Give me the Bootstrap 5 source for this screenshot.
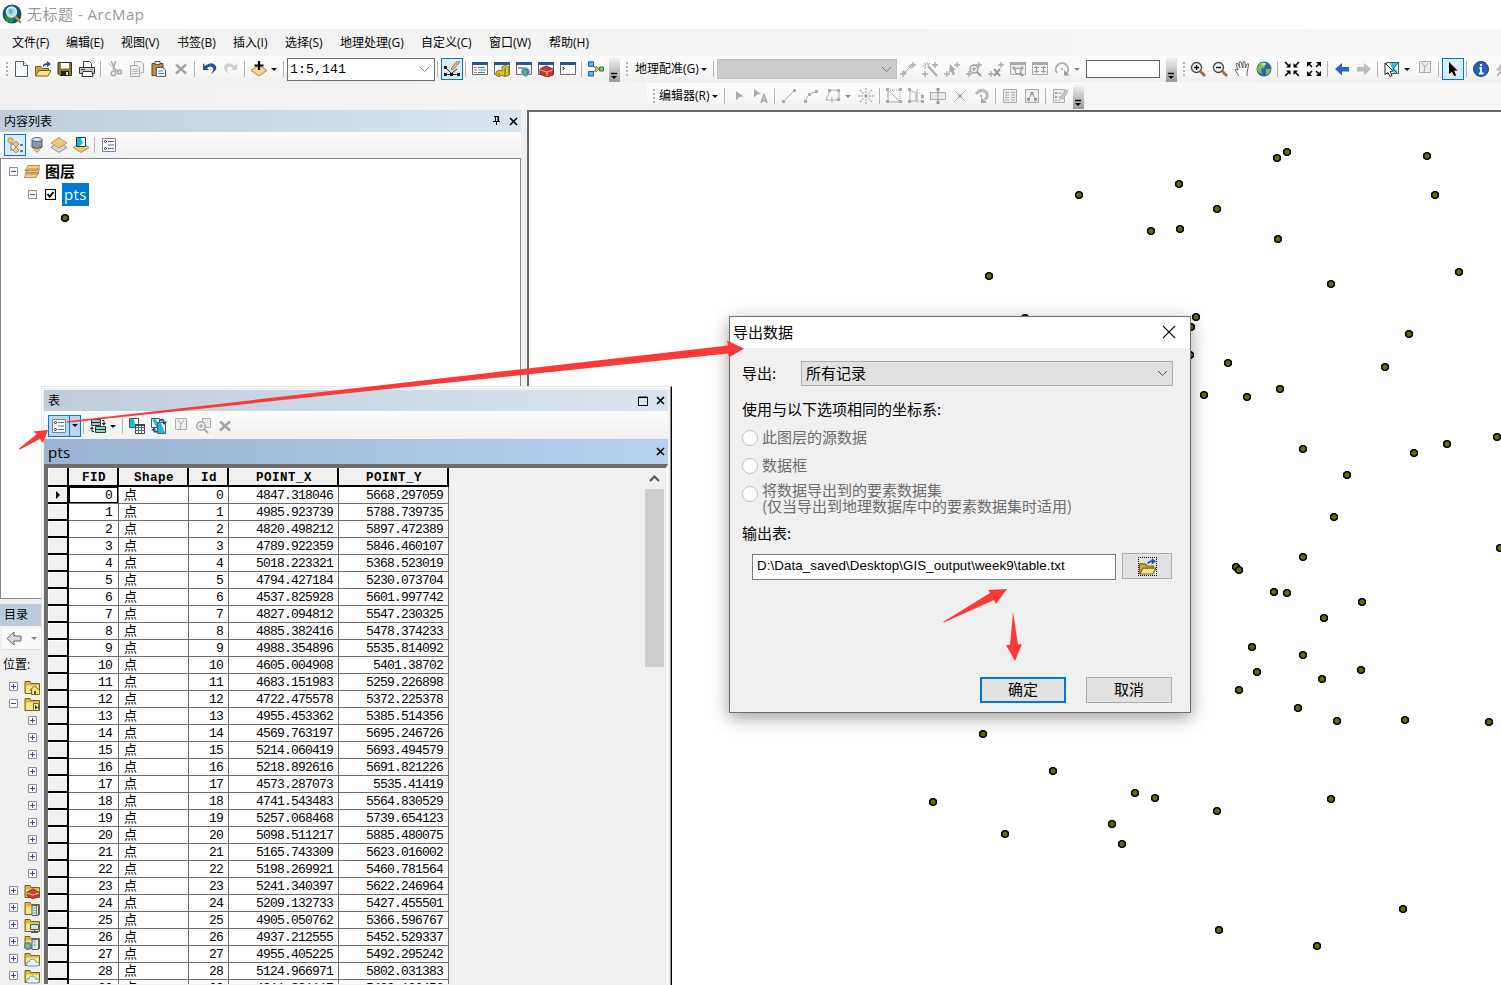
<!DOCTYPE html>
<html lang="zh-CN">
<head>
    <meta charset="UTF-8">
    <meta name="viewport" content="width=device-width, initial-scale=1.0">
    <title>无标题 - ArcMap</title>
    <link rel="stylesheet" href="https://cdn.jsdelivr.net/npm/bootstrap@5.3.0/dist/css/bootstrap.min.css">
    <style>
        body { font-family: "Open Sans", "Noto Sans CJK SC", sans-serif; font-size: 12px; line-height: 16px; color: #000; background: #f0f0f0; width: 1501px; height: 985px; }
        svg { display: block; flex: none; }
        .app-title { height: 29px; font-size: 15px; color: #999; padding: 0 0 1px 2px; }
        .app-title span { letter-spacing: .5px; }
        .app-top { height: 81px; background: linear-gradient(90deg, #f0f0f0, #f7f7f7); }
        .app-menu { height: 27px; padding-left: 12px; }
        .tool-strip { height: 26px; background: linear-gradient(#fcfcfc, #f9f9f9 50%, #eee); }
        .strip-two { width: 437px; margin-left: 647px; margin-top: 1px; }
        .tool { width: 22px; height: 22px; flex: none; display: flex; align-items: center; justify-content: center; }
        .tool.on { border: 1px solid #0078d7; background: #dcebf8; }
        .divide { width: 6px; height: 16px; flex: none; background: linear-gradient(#b5b5b5, #b5b5b5) 2px 0 / 1px 100% no-repeat; }
        .grip { width: 10px; height: 16px; flex: none; background: radial-gradient(#b4b4b4 1px, transparent 1.3px) 5px 0 / 4px 4px repeat-y; }
        .drop { width: 11px; flex: none; padding-left: 1px; }
        .drop::before { content: ""; display: block; width: 6px; border: 3px solid transparent; border-top-color: #111; border-bottom: 0; }
        .drop.dim::before { border-top-color: #888; }
        .more { width: 11px; height: 25px; flex: none; margin-left: 2px; background: linear-gradient(#f4f4f4, #999); padding: 14px 2px 0; }
        .label-menu { flex: none; white-space: nowrap; }
        .scale-box { width: 148px; height: 23px; flex: none; background: #fff; border: 1px solid #6e6e6e; font: 13.3px "Liberation Mono", monospace; padding: 0 4px 0 2px; }
        .layer-box { width: 180px; height: 20px; flex: none; background: #ccc; border: 1px solid #bfbfbf; padding-right: 4px; }
        .blank-box { width: 74px; height: 18px; flex: none; background: #fff; border: 1px solid #646464; margin: 0 4px 0 2px; }
        .work { height: 875px; }
        .dock { width: 527px; }
        .dock-title { width: 521px; height: 22px; background: linear-gradient(90deg, #bfcddb, #d8e5f1); padding: 0 3px 0 4px; }
        .dock-title span { padding-top: 2px; }
        .dock-tools { width: 521px; height: 26px; background: linear-gradient(#fcfcfc, #f0f0f0); padding-left: 4px; }
        .toc { width: 521px; height: 441px; background: #fff; border: 1px solid #828790; font-size: 15px; }
        .toc-row { height: 24px; }
        .toc-row + .toc-row { height: 23px; }
        .toc-row b { margin-left: 5px; }
        .toc-icon { margin-left: 6px; }
        .toc-box { padding-left: 27px; margin-right: 8px; }
        .picked { background: #0078d7; color: #fff; height: 23px; line-height: 22px; padding: 0 2px; width: 27px; letter-spacing: .4px; margin-left: 6px; }
        .catalog-title { height: 22px; width: 41px; margin-top: 5px; background: #bccbdb; padding-left: 4px; }
        .catalog-tools { height: 22px; width: 39px; margin: 2px 0 0 2px; background: #fafafa; border-bottom: 1px solid #ddd; padding-left: 4px; }
        .catalog-label { padding: 7px 0 3px 3px; }
        .catalog-tree { padding-top: 2px; }
        .cat-row { height: 17px; padding-left: 9px; }
        .cat-row.deep { padding-left: 28px; }
        .cat-row svg + svg { margin-left: 6px; }
        .map-view { width: 974px; background: #fff; border: solid #696969; border-width: 2px 0 0 2px; }
        .table-win { left: 41px; top: 386px; width: 631px; height: 599px; background: #f0f0f0; border: 1px solid #e8e8e8; border-right: 1px solid #000; border-bottom: 0; padding: 3px 3px 0 2px; box-shadow: inset -1px 0 #8a8a8a, inset 1px 1px #fff; }
        .win-title { height: 21px; background: linear-gradient(90deg, #bfcddb, #d8e5f1); padding: 0 3px 0 4px; }
        .win-tools { height: 28px; background: linear-gradient(#fcfcfc, #f0f0f0); padding: 2px 0 0 4px; }
        .win-tab { height: 25px; background: linear-gradient(90deg, #9bb2d2, #b9d1ed); font-size: 15px; padding: 0 3px 0 4px; letter-spacing: .3px; }
        .split-btn { border: 1px solid #0078d7; width: 33px; height: 22px; background: #b9d7f2; }
        .split-btn .drop { border-left: 1px solid #0078d7; height: 20px; padding: 8px 0 0 2px; }
        .split-btn span:first-child { width: 20px; }
        .grid-wrap { height: 520px; border: solid #6d6d6d; border-width: 4px 2px 0 4px; border-right-color: #fafafa; }
        .rows { border-collapse: separate; border-spacing: 0; table-layout: fixed; width: 401px; flex: none; background: #fff; font: 13px/15px "Liberation Mono", "Noto Sans CJK SC", monospace; letter-spacing: -.8px; }
        .rows td, .rows th { padding: 1px 5px 0 4px; height: 17px; border-right: 1px solid #6d6d6d; border-bottom: 1px solid #6d6d6d; text-align: right; overflow: hidden; white-space: nowrap; line-height: 15px; }
        .rows th { height: 19px; background: #f0f0f0; border-right: 2px solid #000; border-bottom: 2px solid #000; text-align: center; font: bold 12.5px/13px "Liberation Mono", monospace; letter-spacing: .5px; padding: 4px 0 0 2px; box-shadow: inset 1px 1px #fff; }
        .rows td:first-child { background: #f0f0f0; border-right: 2px solid #000; border-bottom: 2px solid #000; padding: 0 0 0 7px; box-shadow: inset 1px 1px #fff; }
        .rows td:nth-child(2) { padding-right: 6px; }
        .rows td:nth-child(3) { text-align: left; padding-left: 5px; }
        .rows tr.now td:nth-child(2) { box-shadow: inset 0 0 0 1px #000; }
        .scroller { width: 19px; margin-right: 2px; }
        .thumb { height: 178px; background: #cdcdcd; }
        .export-win { left: 729px; top: 316px; width: 462px; height: 397px; background: #f0f0f0; border: 1px solid #6f6f6f; box-shadow: 0 5px 16px rgba(0, 0, 0, .38); font-family: "Noto Sans CJK SC", sans-serif; font-size: 15px; }
        .export-title { height: 31px; background: #fff; padding: 0 14px 1px 3px; }
        .export-title span { padding-bottom: 1px; }
        .export-body { padding: 13px 17px 0 12px; }
        .export-select { width: 372px; height: 25px; background: #e1e1e1; border: 1px solid #adadad; padding: 0 4px; }
        .export-select span, .export-label { padding-bottom: 2px; }
        .export-hint { padding: 15px 0 7px; }
        .choice { color: #6d6d6d; height: 28px; }
        .choice > span:last-child { padding-bottom: 2px; }
        .choice .two-line { padding: 9px 0 0; }
        .ring { width: 16px; height: 16px; flex: none; border: 1px solid #c2c2c2; border-radius: 50%; background: #fff; margin-right: 4px; }
        .export-out { padding: 17px 0 13px; }
        .path-box { width: 364px; height: 26px; margin-left: 10px; border: 1px solid #7a7a7a; background: #fff; font: 13.33px/22px "Liberation Sans", sans-serif; letter-spacing: .07px; padding-left: 4px; white-space: nowrap; }
        .path-line, .export-foot { padding-right: 1px; }
        .flat-btn { height: 26px; border: 1px solid #adadad; background: #e1e1e1; padding-bottom: 2px; }
        .flat-btn.main { border: 2px solid #0078d7; }
        .browse { width: 50px; margin-top: -1px; padding-bottom: 0; }
        .browse svg { outline: 1px dotted #000; }
        .w-86 { width: 86px; }
        .export-foot { margin-top: 97px; }
        .marks { left: 0; top: 0; pointer-events: none; }
    </style>
</head>
<body class="overflow-hidden position-relative">

<div class="app-title bg-white d-flex align-items-center">
    <svg width="21" height="21" viewBox="0 0 21 21" class="me-1"><circle cx="10" cy="10" r="9.5" fill="#16505f"/><path d="M2 6q6-7 13-3l2 4-3 8-7 3-5-5z" fill="#12628c"/><path d="M3 12l5-1 4 5-3 3q-6-1-6-7z" fill="#2c8a52"/><circle cx="9.5" cy="8" r="5" fill="#a8dbe8" stroke="#e5f5f8" stroke-width="1.3"/><path d="M7 5l4 1-1 4-3-1z" fill="#66b7a5"/><path d="M13 12l6 7" stroke="#c48a58" stroke-width="2.5"/></svg>
    <span>无标题 - ArcMap</span>
</div>

<div class="app-top">
    <div class="app-menu d-flex align-items-center" id="menuBar"></div>
    <div class="tool-strip d-flex align-items-center overflow-hidden" id="stripOne"></div>
    <div class="tool-strip strip-two d-flex align-items-center" id="stripTwo"></div>
</div>

<div class="work d-flex">
    <div class="dock">
        <div class="dock-title d-flex align-items-center">
            <span class="me-auto">内容列表</span>
            <svg width="10" height="10" viewBox="0 0 10 10" class="me-2"><path d="M3 .5h5M4.500 0v5M7.500 0v5M2 5.500h7M5.500 5v4" stroke="#000" fill="none"/><path d="M7 1v5" stroke="#000"/></svg>
            <svg width="9" height="9" viewBox="0 0 9 9"><path d="M1 1l7 7M8 1L1 8" stroke="#000" stroke-width="1.6"/></svg>
        </div>
        <div class="dock-tools d-flex align-items-center" id="tocTools"></div>
        <div class="toc">
            <div class="toc-row d-flex align-items-center ps-2" id="tocRoot"></div>
            <div class="toc-row d-flex align-items-center" id="tocLayer"></div>
            <div class="toc-row d-flex align-items-center" id="tocSymbol"></div>
        </div>
        <div class="catalog-title d-flex align-items-center">目录</div>
        <div class="catalog-tools d-flex align-items-center">
            <svg width="17" height="15" viewBox="0 0 17 15"><path d="M1 7.500L8 1v4h7v5H8v4z" fill="#d8d8d8" stroke="#666"/></svg>
            <span class="drop dim ms-1 ps-1"></span>
        </div>
        <div class="catalog-label">位置:</div>
        <div class="catalog-tree" id="catalogTree"></div>
    </div>
    <div class="map-view">
        <svg width="972" height="873" viewBox="529 112 972 873" id="mapPoints"></svg>
    </div>
</div>

<!-- 属性表窗口 -->
<div class="table-win position-absolute">
    <div class="win-title d-flex align-items-center">
        <span class="me-auto">表</span>
        <svg width="10" height="10" viewBox="0 0 10 10" class="me-2"><path d="M.5 1h9v8.500h-9zM0 1.500h10" stroke="#000" fill="none"/></svg>
        <svg width="9" height="9" viewBox="0 0 9 9"><path d="M1 1l7 7M8 1L1 8" stroke="#000" stroke-width="1.6"/></svg>
    </div>
    <div class="win-tools d-flex align-items-center" id="winTools"></div>
    <div class="win-tab d-flex align-items-center">
        <span class="me-auto">pts</span>
        <svg width="9" height="9" viewBox="0 0 9 9"><path d="M1 1l7 7M8 1L1 8" stroke="#000" stroke-width="1.6"/></svg>
    </div>
    <div class="grid-wrap d-flex justify-content-between overflow-hidden">
        <div>
            <table class="rows">
                <colgroup><col width="21"><col width="50"><col width="70"><col width="40"><col width="110"><col width="110"></colgroup>
                <thead><tr><th></th><th>FID</th><th>Shape</th><th>Id</th><th>POINT_X</th><th>POINT_Y</th></tr></thead>
                <tbody id="tableRows"></tbody>
            </table>
        </div>
        <div class="scroller">
            <svg width="19" height="21" viewBox="0 0 19 21"><path d="M5 13l4.500-4.500L14 13" fill="none" stroke="#555" stroke-width="2"/></svg>
            <div class="thumb"></div>
        </div>
    </div>
</div>

<!-- 导出数据对话框 -->
<div class="export-win position-absolute">
    <div class="export-title d-flex align-items-center justify-content-between">
        <span>导出数据</span>
        <svg width="14" height="14" viewBox="0 0 14 14"><path d="M1 1l12 12M13 1L1 13" stroke="#111" stroke-width="1.1"/></svg>
    </div>
    <div class="export-body">
        <div class="d-flex align-items-center justify-content-between">
            <span class="export-label">导出:</span>
            <div class="export-select d-flex align-items-center justify-content-between">
                <span>所有记录</span>
                <svg width="11" height="7" viewBox="0 0 11 7"><path d="M1 1l4.500 4.500L10 1" fill="none" stroke="#555"/></svg>
            </div>
        </div>
        <div class="export-hint">使用与以下选项相同的坐标系:</div>
        <div class="choice d-flex align-items-center"><span class="ring"></span><span>此图层的源数据</span></div>
        <div class="choice d-flex align-items-center"><span class="ring"></span><span>数据框</span></div>
        <div class="choice d-flex align-items-center"><span class="ring"></span><span class="two-line">将数据导出到的要素数据集<br>(仅当导出到地理数据库中的要素数据集时适用)</span></div>
        <div class="export-out">输出表:</div>
        <div class="path-line d-flex justify-content-between">
            <div class="path-box">D:\Data_saved\Desktop\GIS_output\week9\table.txt</div>
            <div class="flat-btn browse d-flex align-items-center justify-content-center" id="browseBtn"></div>
        </div>
        <div class="export-foot d-flex justify-content-end">
            <div class="flat-btn main w-86 d-flex align-items-center justify-content-center me-3">确定</div>
            <div class="flat-btn w-86 d-flex align-items-center justify-content-center ms-1">取消</div>
        </div>
    </div>
</div>

<!-- 红色箭头标注 -->
<svg class="marks position-absolute" width="1501" height="985" fill="#fb3a37">
    <path d="M67 421.300L728 345.500l-1-5 17 8-15 9-1-4L67 422.700z"/>
    <path d="M19 448.500L37 434l-4-2.500 15-1.500-5 13-3-4-20 10.500z"/>
    <path d="M943 622l47-29-2-3 19-1-11 15-2-4-50 22.500z"/>
    <path d="M1013 612l5 32.500 4-.5-7 17-9-16h4z"/>
</svg>

<script>
    const folder = '<path d="M1 2.500h5l1 2h8.500v10H1z" fill="#d9b53c" stroke="#77641c"/><path d="M2 6.500h13v7.500H2z" fill="#fae58a"/>';
    const winBox = '<path d="M.5 1.500h15v12H.5z" fill="#fff" stroke="#666"/><path d="M0 1h16v3H0z" fill="#26569c"/>';
    const winDim = '<path d="M.5 1.500h15v12H.5z" fill="#eee" stroke="#aaa"/><path d="M0 1h16v3H0z" fill="#aaa"/>';
    const plusPair = '<path d="M0 13h6M3 10v6M10 4h6M13 1v6" stroke="#aaa" stroke-width="1.300"/>';
    const mapDim = '<path d="M2.500.5h11v11h-11z" fill="#eee" stroke="#aaa"/><path d="M5 2l3 4 3-4M8 6l-1 5" stroke="#aaa" fill="none"/>';
    const glass = '<circle cx="6.500" cy="6.500" r="5" fill="#eef4f8" stroke="#444" stroke-width="1.300"/><path d="M10.500 10.500l4.500 4.500" stroke="#ad6546" stroke-width="2.600"/>';

    // 16x16 图标
    const icons = {
        page: '<path d="M2.500.5h8l4 4v11h-12z" fill="#f4faff" stroke="#4b5a6a"/><path d="M10.500.5v4h4" fill="#fff" stroke="#4b5a6a"/>',
        open: '<path d="M.5 15V5.500H6l1.500 2h6V10" fill="#c8a936" stroke="#77641c"/><path d="M.7 15L4 9.500h12L13 15z" fill="#fae58a" stroke="#77641c"/><path d="M8 4q2-2 4-2V0l4 3-4 3V4q-2 0-4 2z" fill="#1c5793"/>',
        save: '<path d="M1 1.500h13.500v13H3l-2-2z" fill="#8c7c2c" stroke="#30301c"/><path d="M4 2h8v5.500H4z" fill="#fff"/><path d="M4 10h8v5H4z" fill="#222"/><path d="M9 11h2v3H9z" fill="#ddd"/>',
        print: '<path d="M4.500 6V.5h6l2 2V6" fill="#fff" stroke="#444"/><path d="M.5 6.500h15v6H.5z" fill="#ccc" stroke="#333"/><path d="M4 10.500h9l1 5H3z" fill="#fff" stroke="#333"/><path d="M2 8.500h4" stroke="#333"/><path d="M11 8.500h3" stroke="#b6a000"/>',
        cut: '<path d="M4 0l5 10M8.500 0L6 9M9 9l3 2" stroke="#aaa" stroke-width="1.500"/><path d="M1 2l10 8" stroke="#bbb"/><circle cx="6.500" cy="12.500" r="2.200" fill="none" stroke="#aaa" stroke-width="1.500"/><circle cx="12.500" cy="11" r="2" fill="none" stroke="#aaa" stroke-width="1.500"/>',
        copy: '<path d="M5.500.5H12l2.500 2.500v9h-9z" fill="#f2f2f2" stroke="#aaa"/><path d="M1.500 4.500H8l2.500 2v9h-9z" fill="#eee" stroke="#aaa"/><path d="M3 8.500h6M3 10.500h6M3 12.500h6" stroke="#b8b8b8"/>',
        paste: '<path d="M1 2.500h11v12H1z" fill="#d08436" stroke="#664220"/><path d="M4 .5h5v3H4z" fill="#eee" stroke="#555"/><path d="M5.500 6.500h6l3 2.500v6.500h-9z" fill="#fff" stroke="#3b5f88"/><path d="M7 10h5M7 12.500h6" stroke="#5588b5"/>',
        del: '<path d="M3 3.500l10 9M13 3.500l-10 9" stroke="#a5a5a5" stroke-width="2.500"/>',
        undo: '<path d="M2 2v7h6L6 7q3-2.500 5-1 3 2-1 7 8-5 4-9-4-4-10 1z" fill="#245396"/>',
        redo: '<path d="M14 2v7H8l2-2Q7 4.500 5 6q-3 2 1 7-7-5-4-9 4-4 10 1z" fill="#ccc"/>',
        add: '<path d="M8 4l8 5.500L8 15 0 9.500z" fill="#f6d68f" stroke="#a98345"/><path d="M8 0v9M3.500 4.500h9" stroke="#000" stroke-width="2.200"/>',
        edit: '<path d="M2 13.500h12M2 7l5 5M8 12l5-4" stroke="#222" fill="none"/><path d="M0 5h3v3H0zM0 12h3v3H0zM6 12h3v3H6zM13 12h3v3h-3z" fill="#111"/><path d="M7 9l1-3 6-7 2 2-6 7z" fill="#e2a96d" stroke="#9d6737" stroke-width=".6"/>',
        tocWin: winBox + '<path d="M2 6.500h3M2 9h3M2 11.500h3" stroke="#d36b40"/><path d="M6 6.500h7M7 9h7M6 11.500h7" stroke="#3c7dc2"/>',
        catWin: winBox + '<path d="M8 6l3-2 4 2v8l-4 2-3-2-3 2-3-2v-3l3-2 3 1z" fill="#d9c42f" stroke="#7e7317"/><path d="M11 7v8M5 12v3" stroke="#665c15" fill="none"/>',
        searchWin: winBox + '<path d="M2 7h8" stroke="#999" stroke-width="2"/><circle cx="9.500" cy="11" r="4.300" fill="#3b85bd" stroke="#9fc3d8"/><path d="M7 9l4 1-1 4-3-2z" fill="#76b04b"/>',
        boxWin: winBox + '<path d="M2 8l6-3 7 3v6l-6 2-7-3z" fill="#c83a30" stroke="#8b1d18"/><path d="M2 9l7 2 6-2M9 11v4" stroke="#f3aaa2" fill="none"/>',
        pyWin: winBox + '<path d="M2.500 6l2 1.500-2 1.500" stroke="#111" fill="none"/>',
        model: '<path d="M3 3.500l6 4.500-6 5M9 8h4" stroke="#555" fill="none"/><path d="M.5.8h5v4.500h-5zM.5 10.500h5V15h-5z" fill="#64b4e8" stroke="#1c5c9c"/><path d="M8 5l3 3-3 3z" fill="#f1c777" stroke="#9b7a40"/><path d="M11.500 6h4v4h-4z" fill="#7fc36b" stroke="#3b7a2c"/>',
        ctrl: plusPair + '<path d="M4 12l7-7M4 9v3h3M8 5h3v3" stroke="#aaa" fill="none"/>',
        wand: plusPair + '<path d="M6 5l9 10" stroke="#aaa" stroke-width="2"/><path d="M5 1v3M1 5h3M2 2l2 2M2 8l2-2M8 2L6 4" stroke="#aaa"/>',
        ctrlSel: plusPair + '<path d="M6 3l6 6-2.500.5 1.500 4-2 1-2-4-2 2z" fill="#aaa"/>',
        ctrlZoom: plusPair + '<circle cx="8" cy="8" r="4" fill="#eee" stroke="#999" stroke-width="1.300"/><path d="M11 11l4 4" stroke="#999" stroke-width="2"/><path d="M6 8h4M8 6v4" stroke="#999"/>',
        ctrlDel: plusPair + '<path d="M6 8l6 7M12 8l-6 7" stroke="#999" stroke-width="2"/>',
        viewer: winDim + '<path d="M2 7h4M4 5v4M10 7h4M12 5v4" stroke="#999"/><circle cx="8" cy="10" r="3" fill="#eee" stroke="#999"/><path d="M10 12l3 3" stroke="#999" stroke-width="2"/>',
        linkTable: winDim + '<path d="M2 6.500h5M9 6.500h5M2 10.500h5M9 10.500h5M4.500 5v7M11.500 5v7" stroke="#999"/>',
        rotate: '<path d="M3 12a6.200 6.200 0 1 1 10 0" fill="none" stroke="#aaa" stroke-width="1.800"/><path d="M10 9v5.500h5.500z" fill="#999"/><circle cx="8" cy="8" r="1" fill="#999"/>',
        zoomIn: glass + '<path d="M4 6.500h5M6.500 4v5" stroke="#000" stroke-width="1.300"/>',
        zoomOut: glass + '<path d="M4 6.500h5" stroke="#000" stroke-width="1.300"/>',
        hand: '<path d="M5 15L1 9q0-2 3 0L2 3q1-2 2 0l2 4-1-6q1-1 2 0l2 6V1q1-1 2 0l.5 6L13 3q2-1 1.500 1L13 12v3" fill="#fff" stroke="#555" stroke-width=".9"/>',
        globe: '<circle cx="8" cy="8" r="7.500" fill="#286aa5"/><path d="M3 3q5-3 7 0L8 7l-3 1 1 5Q1 11 1 7zM10 8l5 0q-1 5-5 6z" fill="#86b84a"/><path d="M5 2q4-1 6 1L6 5z" fill="#dff2ff" opacity=".6"/>',
        shrink: '<path d="M1 1l4 4M15 1l-4 4M1 15l4-4M15 15l-4-4" stroke="#000" stroke-width="1.500"/><path d="M6.500 2v4.500H2zM9.500 2v4.500H14zM6.500 14V9.500H2zM9.500 14V9.500H14z"/>',
        grow: '<path d="M2 2l4 4M14 2l-4 4M2 14l4-4M14 14l-4-4" stroke="#000" stroke-width="1.500"/><path d="M1 1h5L1 6zM15 1h-5l5 5zM1 15h5l-5-5zM15 15h-5l5-5z"/>',
        back: '<path d="M1 8l7-6v4h7v4.500H8v4z" fill="#2864bd"/>',
        next: '<path d="M15 8L8 2v4H1v4.500h7v4z" fill="#bbb"/>',
        selFeat: '<path d="M2.500 1.500h12v11h-12z" fill="#fff" stroke="#555"/><path d="M6 2h8l-4 5 4 4-4 1z" fill="#24c4e6"/><path d="M15 1L9 8l5 5" stroke="#555" fill="none"/><path d="M1 2l8 8-3 .5 2 4-2 1-2-4-3 2z" fill="#fff" stroke="#222"/>',
        mapDim: mapDim,
        arrow: '<path d="M4 1l8.500 8.500-3.500.3 2.200 4.400-2 1-2.200-4.500L4 13z" fill="#000"/>',
        info: '<circle cx="8" cy="8" r="7.500" fill="#2561b8" stroke="#174383"/><path d="M8 3v2.300M6.500 7H8v5M6 12.500h4.500" stroke="#fff" stroke-width="1.800" fill="none"/>',
        bolt: '<path d="M7 2L2 9h4l-4 6 9-8H7l5-5z" fill="#ccc" stroke="#aaa"/>',
        edArrow: '<path d="M5 3l7.500 5.500-4 .5L5 12.500z" fill="#aaa"/>',
        edText: '<path d="M1 1l7 5-4 .5L1 10z" fill="#aaa"/><path d="M8 15l3-8 3 8M9 12.500h4" stroke="#aaa" stroke-width="1.800" fill="none"/>',
        line: '<path d="M3 13L13 3" stroke="#aaa"/><path d="M1 12h3v3H1zM12 1h3v3h-3z" fill="#aaa"/>',
        arc: '<path d="M3 13q1-8 10-9" stroke="#aaa" fill="none"/><path d="M1 12h3v3H1zM12 2h3v3h-3zM5 5h3v3H5z" fill="#aaa"/>',
        trace: '<path d="M1 12L5 2h9v10" stroke="#aaa" fill="none"/><path d="M3 1h3v3H3zM12 1h3v3h-3zM12 10h3v3h-3z" fill="#aaa"/><path d="M1 12h12M7 9v6" stroke="#aaa"/>',
        burst: '<path d="M8 0v5M8 11v5M0 8h5M11 8h5M2 2l4 4M14 2l-4 4M2 14l4-4M14 14l-4-4" stroke="#aaa" stroke-width="1.300" stroke-dasharray="2 1"/><path d="M6.500 6.500h3v3h-3z" fill="#999"/>',
        reshape: '<path d="M2 2v12h12L2 2" stroke="#aaa" fill="none"/><path d="M2 2h12v12" stroke="#aaa" stroke-dasharray="1 1" fill="none"/><path d="M0 0h3v3H0zM13 0h3v3h-3zM0 12h3v3H0zM13 12h3v3h-3z" fill="#aaa"/>',
        cutPoly: '<path d="M2 2v11h6V5zM9 1v14" stroke="#aaa" fill="none"/><path d="M9 5h5v8H9" stroke="#aaa" fill="none" stroke-dasharray="1 1"/><path d="M0 0h3v3H0zM0 12h3v3H0zM13 7h3v3h-3zM13 12h3v3h-3z" fill="#aaa"/>',
        split: '<path d="M.5 4.500h15v7H.5z" fill="#e8e8e8" stroke="#aaa"/><path d="M8 1v14" stroke="#999"/><path d="M6.500 0h3v3h-3zM6.500 13h3v3h-3z" fill="#999"/>',
        splitLine: '<path d="M2 14L14 2M3 3l10 10" stroke="#aaa"/><path d="M6.500 6.500h3v3h-3z" fill="#999"/>',
        spin: '<path d="M2 6q5-6 10-2 3 4-1 8" fill="none" stroke="#bbb" stroke-width="3"/><path d="M7 9v6h6z" fill="#aaa"/><circle cx="7" cy="8" r="1.200" fill="#aaa"/>',
        attr: '<path d="M1.500 1.500h13v13h-13z" fill="#eee" stroke="#aaa"/><path d="M3 4.500h4M3 7h4M3 9.500h4M3 12h4M9 4.500h4M9 7h4M9 9.500h4M9 12h4" stroke="#aaa"/>',
        sketch: '<path d="M1.500 1.500h13v13h-13z" fill="#eee" stroke="#aaa"/><path d="M4.500 11l3-5h1l3 5" stroke="#aaa" fill="none"/><path d="M6.500 4h3v3h-3zM3 10h3v3H3zM10 10h3v3h-3z" fill="#999"/>',
        create: '<path d="M1.500 1.500h11v13h-11z" fill="#eee" stroke="#aaa"/><path d="M3 4h2v2H3zM3 8h2v2H3zM3 12h2v1H3z" fill="#999"/><path d="M6 5h4M6 9h3M6 12h3" stroke="#aaa"/><path d="M8 10l6-8 2 1-5 8z" fill="#ccc" stroke="#aaa"/>',
        tree: '<path d="M4 5v8h7M4 7h5" stroke="#87a5c2" fill="none" stroke-width="1.500"/><circle cx="3.500" cy="3.500" r="2.700" fill="#f1c777" stroke="#b58d4c"/><path d="M9 4l3 3-3 3-3-3zM9 10l3 3-3 3-3-3z" fill="#f1c777" stroke="#b58d4c"/><path d="M13 8h3M13 14h3" stroke="#2d6391" stroke-width="1.500"/>',
        source: '<path d="M2.500 9.500l5.500 6 5.500-6z" fill="#f1c777" stroke="#b58d4c"/><path d="M3 2.500h10v7.500q-5 3-10 0z" fill="#8698ab" stroke="#4e5d6c"/><ellipse cx="8" cy="2.500" rx="5" ry="2" fill="#dde7ee" stroke="#4e5d6c"/>',
        visible: '<path d="M8 5l8 5.500-8 5-8-5z" fill="#d8d8d8" stroke="#777" stroke-width=".8"/><path d="M8 .5l8 5.500-8 5-8-5z" fill="#f1c777" stroke="#b58d4c" stroke-width=".8"/>',
        selection: '<path d="M8 5l8 5.500-8 5-8-5z" fill="#f1c777" stroke="#b58d4c"/><path d="M3.500.5h9v9h-9z" fill="#fff" stroke="#333"/><path d="M4 1h4l2 5-3 3H4z" fill="#17bbe0"/>',
        list: '<path d="M1.500 1.500h13v13h-13z" fill="#fff" stroke="#75879b"/><path d="M7 4.500h6M7 8h6M7 11.500h6" stroke="#4b6c92"/><circle cx="4.500" cy="4.500" r="1" fill="#fff" stroke="#222"/><circle cx="4.500" cy="11.500" r="1" fill="#fff" stroke="#222"/>',
        related: '<path d="M1.500 1.500h9v6h-9zM5.500 8.500h10v6h-10z" fill="#8ed0d6" stroke="#333"/><path d="M1 4.500h9M5 11.500h10M12 2.500h2v3M4 13.500H2v-3" stroke="#222" fill="none"/><path d="M11.500 5h4.500l-2.200 2.500zM0 11h4L2 8.500z" fill="#222"/>',
        byAttr: '<path d="M.5.500h9v9h-9z" fill="#fff" stroke="#555"/><path d="M1 1h4l1 5 2 3H1z" fill="#17bbe0"/><path d="M6.500 6.500h9v9h-9z" fill="#fff" stroke="#345"/><path d="M6 9.500h10M6 12.500h10M9.500 7v9M12.500 7v9" stroke="#567"/><path d="M6 6h10v2H6z" fill="#345"/>',
        swap: '<path d="M.5.500h8v9h-8z" fill="#fff" stroke="#555"/><path d="M1 1h4l3 8H5z" fill="#17bbe0"/><path d="M6.500 4.500h8v11h-8z" fill="#fff" stroke="#555"/><path d="M7 5h3l4 10H7z" fill="#17bbe0"/><path d="M9 2.500q3-2 4 1M6 13.500q-3 1-3-1" stroke="#144c88" stroke-width="1.800" fill="none"/><path d="M10.500 3.500h5.500L13 7zM0 12.500h5.500L3 9.500z" fill="#144c88"/>',
        zoomSel: '<path d="M7.500.5h8v9h-8z" fill="#eee" stroke="#aaa"/><circle cx="6" cy="8" r="4.300" fill="#eee" stroke="#aaa" stroke-width="1.500"/><path d="M9 11l4 4" stroke="#aaa" stroke-width="2"/><path d="M4 8h4M6 6v4" stroke="#999"/>',
        layers: '<path d="M3 9.500h12l-3 5H0zM4 6h12l-3 5H1zM4 2.500h12l-3 5H1z" fill="#f3cf8a" stroke="#a57e3c" stroke-width=".8"/>',
        home: folder + '<path d="M6 11l4.500-4 5 4v4.500H7.500V11z" fill="#f7e27a" stroke="#77641c"/><path d="M10 12h2v3h-2z" fill="#555"/>',
        link: folder + '<path d="M9.500 7.500h5v7h-5z" fill="#fdf5bd" stroke="#77641c"/><path d="M11 9l3 2.500-3 2z" fill="#222"/>',
        tools: folder + '<path d="M3 9l6-3 6 3v4l-6 3-6-3z" fill="#d23b31" stroke="#8b1d18" stroke-width=".8"/><path d="M3 10l6 2 6-2" stroke="#ffc0b8" fill="none"/>',
        server: folder + '<path d="M8 5.500h6.500v10H8z" fill="#dce7f0" stroke="#4d6375"/><path d="M12.500 6v9" stroke="#789"/><path d="M9.500 8h2M9.500 10.500h2M9.500 13h2" stroke="#3e9c43"/>',
        dbConn: folder + '<path d="M6.500 7.500h8v5h-8z" fill="#cfe4f3" stroke="#456"/><path d="M10.500 13v2M7 15.500h7" stroke="#456"/>',
        gisServer: folder + '<path d="M8 5.500h6.500v10H8z" fill="#dce7f0" stroke="#4d6375"/><path d="M9.500 8h2M9.500 11h2" stroke="#3e9c43"/><circle cx="4" cy="12" r="3.500" fill="#5fa8b8" stroke="#477"/><path d="M2 10l3 1-1 3z" fill="#9c5"/>',
        cloud: folder + '<path d="M4 15q-3-1-1-3.500 1-1 2-.5 1-4 5-2.500 2 1 2 2.500 4 0 3 3 0 1-2 1z" fill="#e4f1fc" stroke="#6a93b8"/>',
        minus: '<path d="M.5.5h8v8h-8z" fill="#f8f8f8" stroke="#919191"/><path d="M2 4.500h5" stroke="#334c99"/>',
        plus: '<path d="M.5.5h8v8h-8z" fill="#f8f8f8" stroke="#919191"/><path d="M2 4.500h5M4.500 2v5" stroke="#334c99"/>',
        check: '<path d="M.5.5h10v10H.5z" fill="#fff" stroke="#000" stroke-width="1.200"/><path d="M2.500 5l2.200 2.800L8.500 3" fill="none" stroke="#000" stroke-width="1.800"/>'
    };

    function icon(name, size = 16) {
        const box = name === 'minus' || name === 'plus' ? 9 : name === 'check' ? 11 : 16;
        const px = box === 16 ? size : box;
        return `<svg width="${px}" height="${px}" viewBox="0 0 ${box} ${box}">${icons[name]}</svg>`;
    }

    const chevron = '<svg width="11" height="7" viewBox="0 0 11 7"><path d="M1 1l4.500 4.500L10 1" fill="none" stroke="#777"/></svg>';
    const pieces = {
        '|': '<span class="divide"></span>',
        ':': '<span class="grip"></span>',
        'v': '<span class="drop"></span>',
        'w': '<span class="drop dim"></span>',
        '>': '<span class="more"><svg width="7" height="9" viewBox="0 0 7 9"><path d="M0 2.500h6" stroke="#000" stroke-width="1.500"/><path d="M0 5h6L3 8z"/></svg></span>',
        'SCALE': `<span class="scale-box d-flex align-items-center justify-content-between">1:5,141${chevron}</span>`,
        'LAYER': `<span class="layer-box d-flex align-items-center justify-content-end">${chevron}</span>`,
        'BLANK': '<span class="blank-box"></span>'
    };

    // 以空格分隔的工具条描述，* 表示选中的按钮，= 后面是文字和宽度
    function buildStrip(id, spec) {
        document.getElementById(id).innerHTML = spec.split(' ').map(word => {
            if (pieces[word]) return pieces[word];
            if (word[0] === '=') {
                const [text, width] = word.slice(1).split('/');
                return `<span class="label-menu" style="width:${width}px">${text}</span>`;
            }
            const on = word[0] === '*';
            return `<span class="tool${on ? ' on' : ''}">${icon(on ? word.slice(1) : word)}</span>`;
        }).join('');
    }

    const menus = [['文件(F)', 54], ['编辑(E)', 55], ['视图(V)', 56], ['书签(B)', 56], ['插入(I)', 52], ['选择(S)', 55], ['地理处理(G)', 81], ['自定义(C)', 68], ['窗口(W)', 60], ['帮助(H)', 50]];
    document.getElementById('menuBar').innerHTML = menus.map(m => `<span class="label-menu" style="width:${m[1]}px">${m[0]}</span>`).join('');

    buildStrip('stripOne', ': page open save print | cut copy paste del | undo redo | add v | SCALE | *edit | tocWin catWin searchWin boxWin pyWin | model > : =/5 =地理配准(G)/65 v | LAYER ctrl wand ctrlSel ctrlZoom ctrlDel viewer linkTable rotate w BLANK > : zoomIn zoomOut hand globe | shrink grow | back next | selFeat v mapDim | *arrow | info bolt');
    buildStrip('stripTwo', ': =/2 =编辑器(R)/52 v | edArrow edText | line arc trace w burst | reshape cutPoly split splitLine spin | attr sketch | create >');
    buildStrip('tocTools', '*tree source visible selection | list');

    document.getElementById('winTools').innerHTML =
        '<div class="split-btn d-flex align-items-center"><span class="d-flex justify-content-center">' + icon('list') + '</span><span class="drop"></span></div>' +
        '<span class="divide"></span><span class="tool">' + icon('related') + '</span>' + pieces.v + pieces['|'] +
        ['byAttr', 'swap', 'mapDim', 'zoomSel', 'del'].map(n => `<span class="tool">${icon(n)}</span>`).join('');

    document.getElementById('browseBtn').innerHTML = icon('open', 17);
    document.getElementById('tocRoot').innerHTML = icon('minus') + '<span class="toc-icon">' + icon('layers') + '</span><b>图层</b>';
    document.getElementById('tocLayer').innerHTML = '<span class="toc-box">' + icon('minus') + '</span>' + icon('check') + '<span class="picked">pts</span>';

    const dot = (x, y) => `<path d="M${x - 1.5} ${y - 4}h3l2.500 2v4l-2.500 2h-3l-2.500-2v-4z" fill="#000"/><path d="M${x - 1} ${y - 2.5}h2l1.500 1.500v2l-1.500 1.500h-2l-1.500-1.500v-2z" fill="#5a7300"/>`;
    document.getElementById('tocSymbol').innerHTML = `<span class="ps-5 ms-2"><svg width="16" height="12" viewBox="-8 -6 16 12">${dot(0, 0)}</svg></span>`;

    const catalog = ['plus home', 'minus link', ...Array(10).fill('plus'), 'plus tools', 'plus server', 'plus dbConn', 'plus gisServer', 'plus cloud', 'plus cloud'];
    document.getElementById('catalogTree').innerHTML = catalog.map(row => {
        const names = row.split(' ');
        return `<div class="cat-row d-flex align-items-center${names.length === 1 ? ' deep' : ''}">${names.map(n => icon(n)).join('')}</div>`;
    }).join('');

    const points = [
        [1287, 152], [1277, 158], [1427, 156], [1179, 184], [1079, 195], [1435, 195], [1217, 209], [1180, 229], [1151, 231],
        [1278, 239], [1459, 272], [989, 276], [1331, 284], [1025, 318], [1196, 317], [1191, 327], [1409, 334], [1190, 355],
        [1228, 363], [1385, 367], [1280, 389], [1204, 395], [1247, 397], [1497, 437], [1447, 444], [1303, 449], [1414, 453],
        [1347, 475], [1334, 517], [1500, 548], [1303, 557], [1236, 567], [1239, 570], [1274, 592], [1287, 593], [1362, 602],
        [1324, 618], [1252, 647], [1303, 655], [1361, 670], [1257, 672], [1322, 679], [1239, 690], [1298, 708], [1337, 721],
        [1405, 720], [1489, 722], [983, 734], [1053, 771], [1135, 793], [1155, 798], [1331, 799], [933, 802], [1217, 811],
        [1112, 824], [1005, 834], [1122, 844], [1403, 909], [1219, 930], [1317, 946]
    ];
    document.getElementById('mapPoints').innerHTML = points.map(p => dot(p[0], p[1])).join('');

    const data = [
        ['4847.318046', '5668.297059'], ['4985.923739', '5788.739735'], ['4820.498212', '5897.472389'], ['4789.922359', '5846.460107'],
        ['5018.223321', '5368.523019'], ['4794.427184', '5230.073704'], ['4537.825928', '5601.997742'], ['4827.094812', '5547.230325'],
        ['4885.382416', '5478.374233'], ['4988.354896', '5535.814092'], ['4605.004908', '5401.38702'], ['4683.151983', '5259.226898'],
        ['4722.475578', '5372.225378'], ['4955.453362', '5385.514356'], ['4569.763197', '5695.246726'], ['5214.060419', '5693.494579'],
        ['5218.892616', '5691.821226'], ['4573.287073', '5535.41419'], ['4741.543483', '5564.830529'], ['5257.068468', '5739.654123'],
        ['5098.511217', '5885.480075'], ['5165.743309', '5623.016002'], ['5198.269921', '5460.781564'], ['5241.340397', '5622.246964'],
        ['5209.132733', '5427.455501'], ['4905.050762', '5366.596767'], ['4937.212555', '5452.529337'], ['4955.405225', '5492.295242'],
        ['5124.966971', '5802.031383'], ['4811.891117', '5429.126456']
    ];
    document.getElementById('tableRows').innerHTML = data.map((r, i) => `
        <tr${i === 0 ? ' class="now"' : ''}>
            <td>${i === 0 ? '<svg width="6" height="8" viewBox="0 0 6 8"><path d="M1 0l4 4-4 4z"/></svg>' : ''}</td>
            <td>${i}</td><td>点</td><td>${i}</td><td>${r[0]}</td><td>${r[1]}</td>
        </tr>`).join('');
</script>

<script src="https://cdn.jsdelivr.net/npm/bootstrap@5.3.0/dist/js/bootstrap.bundle.min.js"></script>
</body>
</html>
